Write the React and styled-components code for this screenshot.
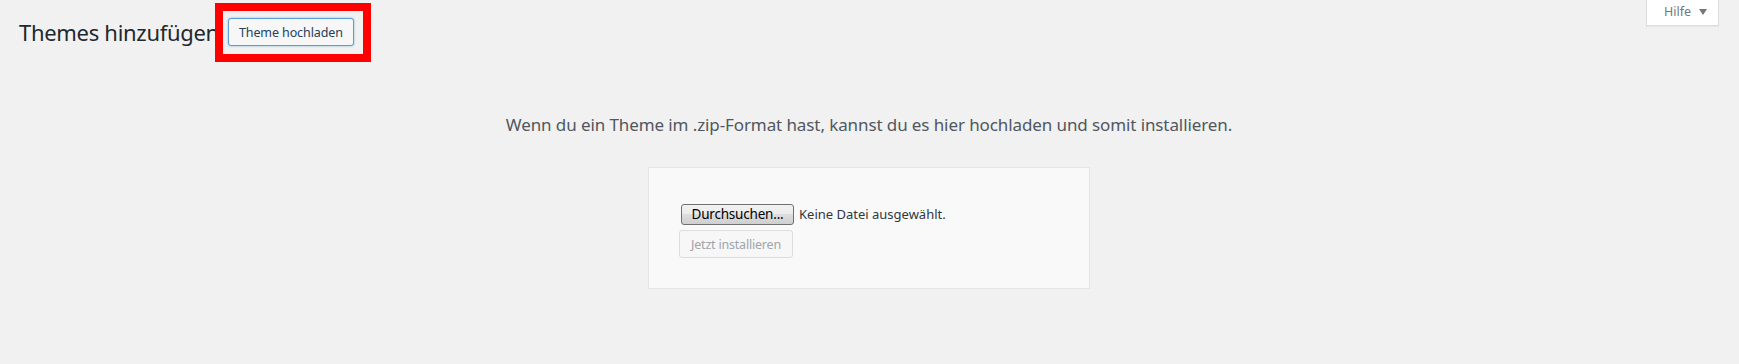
import React from 'react';
import styled, { createGlobalStyle } from 'styled-components';

const GlobalStyle = createGlobalStyle`
  html, body {
    margin: 0;
    padding: 0;
    background: #f1f1f1;
  }
  body {
    font-family: "Noto Sans", "Open Sans", "Liberation Sans", sans-serif;
    color: #23282d;
  }
`;

const Page = styled.div`
  width: 100%;
  min-height: 364px;
  box-sizing: border-box;
  padding: 0 20px 0 19px;
`;

const TopBar = styled.div`
  display: flex;
  justify-content: space-between;
  align-items: flex-start;
`;

const TitleRow = styled.div`
  display: flex;
  align-items: center;
  gap: 9px;
  padding-top: 17px;
`;

const Title = styled.h1`
  margin: 0;
  font-size: 22px;
  font-weight: 400;
  line-height: 30px;
  letter-spacing: -0.3px;
  color: #23282d;
`;

const Marked = styled.div`
  position: relative;
`;

// rote Markierung über dem Button
const RedFrame = styled.div`
  position: absolute;
  left: -13px;
  top: -15px;
  right: -17px;
  bottom: -16px;
  border: 8px solid #ff0000;
  pointer-events: none;
`;

const TitleButton = styled.button`
  display: block;
  height: 28px;
  padding: 0 8px;
  width: 126px;
  box-sizing: border-box;
  border: 1px solid #5b9dd9;
  border-radius: 3px;
  background: #f7f7f7;
  box-shadow: 0 0 2px rgba(30, 140, 190, 0.6);
  color: #23405c;
  font-family: inherit;
  font-size: 12.5px;
  letter-spacing: -0.1px;
  white-space: nowrap;
`;

const HelpTab = styled.div`
  display: flex;
  align-items: center;
  gap: 8px;
  width: 73px;
  height: 26px;
  box-sizing: border-box;
  padding: 0 0 2px 17px;
  background: #fff;
  border: 1px solid #ddd;
  border-top: none;
  box-shadow: 0 1px 1px rgba(0, 0, 0, 0.04);
  color: #72777c;
  font-size: 12.5px;
`;

const Arrow = styled.span`
  width: 0;
  height: 0;
  border-left: 4px solid transparent;
  border-right: 4px solid transparent;
  border-top: 6px solid #72777c;
  margin-top: 1px;
`;

const Help = styled.p`
  margin: 0;
  padding-top: 64px;
  text-align: center;
  font-size: 17px;
  line-height: 28px;
  letter-spacing: -0.1px;
  color: #50575e;
`;

const FormWrap = styled.div`
  display: flex;
  justify-content: center;
  padding-top: 28px;
`;

const UploadForm = styled.div`
  width: 380px;
  padding: 30px;
  background: #f9f9f9;
  border: 1px solid #e5e5e5;
  display: flex;
  flex-direction: column;
  align-items: flex-start;
`;

const FileRow = styled.div`
  display: flex;
  align-items: center;
  gap: 5px;
  height: 32px;
  padding-left: 2px;
  font-size: 13px;
  color: #32373c;
`;

const BrowseButton = styled.span`
  display: flex;
  align-items: center;
  justify-content: center;
  width: 113px;
  height: 21px;
  box-sizing: border-box;
  border: 1px solid #707070;
  border-radius: 3px;
  background: linear-gradient(#f2f2f2, #ebebeb 50%, #dddddd 50%, #cfcfcf);
  color: #000;
  font-size: 13.5px;
  letter-spacing: -0.2px;
`;

const FileName = styled.span`
  font-size: 13px;
  letter-spacing: 0;
`;

const InstallButton = styled.button`
  width: 114px;
  height: 28px;
  box-sizing: border-box;
  border: 1px solid #ddd;
  border-radius: 3px;
  background: #f7f7f7;
  color: #a0a5aa;
  font-family: inherit;
  font-size: 12.5px;
  letter-spacing: -0.2px;
  padding: 0;
`;

export default function App() {
  return (
    <Page>
      <GlobalStyle />
      <TopBar>
        <TitleRow>
          <Title>Themes hinzufügen</Title>
          <Marked>
            <TitleButton>Theme hochladen</TitleButton>
            <RedFrame />
          </Marked>
        </TitleRow>
        <HelpTab>
          Hilfe <Arrow />
        </HelpTab>
      </TopBar>

      <Help>Wenn du ein Theme im .zip-Format hast, kannst du es hier hochladen und somit installieren.</Help>

      <FormWrap>
        <UploadForm>
          <FileRow>
            <BrowseButton>Durchsuchen...</BrowseButton>
            <FileName>Keine Datei ausgewählt.</FileName>
          </FileRow>
          <InstallButton disabled>Jetzt installieren</InstallButton>
        </UploadForm>
      </FormWrap>
    </Page>
  );
}
